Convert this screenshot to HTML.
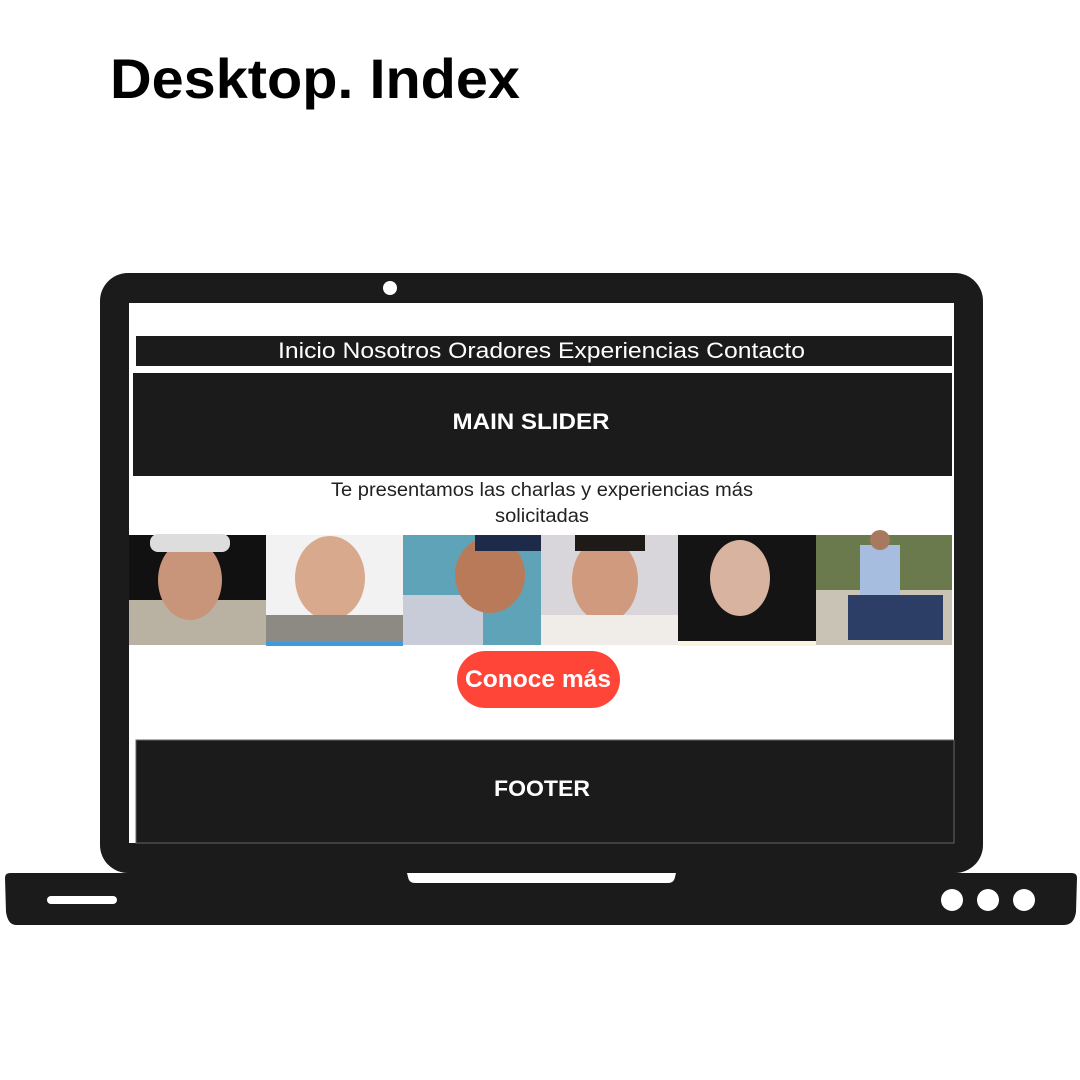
<!DOCTYPE html>
<html><head><meta charset="utf-8"><style>
html,body{margin:0;padding:0;background:#fff;width:1080px;height:1080px;overflow:hidden}
svg{display:block}
text{font-family:"Liberation Sans",sans-serif}
</style></head><body>
<svg width="1080" height="1080" viewBox="0 0 1080 1080" xmlns="http://www.w3.org/2000/svg">
<text x="110" y="98" font-size="56" font-weight="bold" fill="#000" textLength="410" lengthAdjust="spacingAndGlyphs">Desktop. Index</text>
<!-- lid -->
<rect x="100" y="273" width="883" height="600" rx="28" fill="#1b1b1b"/>
<circle cx="390" cy="288" r="7" fill="#fff"/>
<rect x="129" y="303" width="825" height="540" fill="#fff"/>
<!-- nav -->
<rect x="136" y="336" width="816" height="30" fill="#1b1b1b"/>
<text x="278" y="358" font-size="22" fill="#fff" textLength="527" lengthAdjust="spacingAndGlyphs">Inicio  Nosotros  Oradores  Experiencias  Contacto</text>
<!-- slider -->
<rect x="133" y="373" width="819" height="103" fill="#1b1b1b"/>
<text x="531" y="429" font-size="22" font-weight="bold" fill="#fff" text-anchor="middle" textLength="157" lengthAdjust="spacingAndGlyphs">MAIN SLIDER</text>
<text x="542" y="496" font-size="19" fill="#222" text-anchor="middle" textLength="422" lengthAdjust="spacingAndGlyphs">Te presentamos las charlas y experiencias más</text>
<text x="542" y="522" font-size="19" fill="#222" text-anchor="middle" textLength="94" lengthAdjust="spacingAndGlyphs">solicitadas</text>
<!-- photos -->
<g>
<rect x="129" y="535" width="137" height="110" fill="#111"/>
<rect x="129" y="600" width="137" height="45" fill="#b9b2a3"/>
<ellipse cx="190" cy="580" rx="32" ry="40" fill="#c9957a"/>
<rect x="150" y="534" width="80" height="18" rx="8" fill="#ddd"/>
<rect x="266" y="535" width="137" height="110" fill="#f2f2f2"/>
<ellipse cx="330" cy="578" rx="35" ry="42" fill="#d9a98e"/>
<rect x="266" y="615" width="137" height="27" fill="#8d8a84"/>
<rect x="266" y="642" width="137" height="4" fill="#3a9be0"/>
<rect x="403" y="535" width="138" height="110" fill="#5fa3b8"/>
<rect x="403" y="595" width="80" height="50" fill="#c8ccd8"/>
<ellipse cx="490" cy="575" rx="35" ry="38" fill="#b97a5a"/>
<rect x="475" y="535" width="66" height="16" fill="#1e2a4a"/>
<rect x="541" y="535" width="137" height="110" fill="#d8d6da"/>
<ellipse cx="605" cy="580" rx="33" ry="42" fill="#cf9a7d"/>
<rect x="575" y="535" width="70" height="16" fill="#1d1a18"/>
<rect x="541" y="615" width="137" height="30" fill="#f0ede8"/>
<rect x="678" y="535" width="138" height="110" fill="#141414"/>
<ellipse cx="740" cy="578" rx="30" ry="38" fill="#d8b3a0"/>
<rect x="678" y="641" width="138" height="5" fill="#fbf3e0"/>
<rect x="816" y="535" width="136" height="110" fill="#6b7a4d"/>
<rect x="816" y="590" width="136" height="55" fill="#c9c3b6"/>
<rect x="860" y="545" width="40" height="55" fill="#a6bde0"/>
<rect x="848" y="595" width="95" height="45" fill="#2c3e66"/>
<circle cx="880" cy="540" r="10" fill="#a77a60"/>
</g>
<!-- button -->
<rect x="457" y="651" width="163" height="57" rx="28.5" fill="#ff4438"/>
<text x="538" y="687" font-size="24" font-weight="bold" fill="#fff" text-anchor="middle" textLength="146" lengthAdjust="spacingAndGlyphs">Conoce más</text>
<!-- footer -->
<rect x="136" y="740" width="818" height="103" fill="#1b1b1b" stroke="#666" stroke-width="1"/>
<text x="542" y="796" font-size="22" font-weight="bold" fill="#fff" text-anchor="middle" textLength="96" lengthAdjust="spacingAndGlyphs">FOOTER</text>
<!-- base -->
<path d="M10 873 H1072 Q1077 873 1077 878 L1076 912 Q1074 925 1064 925 H16 Q8 925 6 912 L5 878 Q5 873 10 873 Z" fill="#1b1b1b"/>
<path d="M407 873 H676 L675 877 Q674 883 668 883 H415 Q409 883 408 877 Z" fill="#fff"/>
<rect x="47" y="896" width="70" height="8" rx="4" fill="#fff"/>
<circle cx="952" cy="900" r="11" fill="#fff"/>
<circle cx="988" cy="900" r="11" fill="#fff"/>
<circle cx="1024" cy="900" r="11" fill="#fff"/>
</svg>
</body></html>
